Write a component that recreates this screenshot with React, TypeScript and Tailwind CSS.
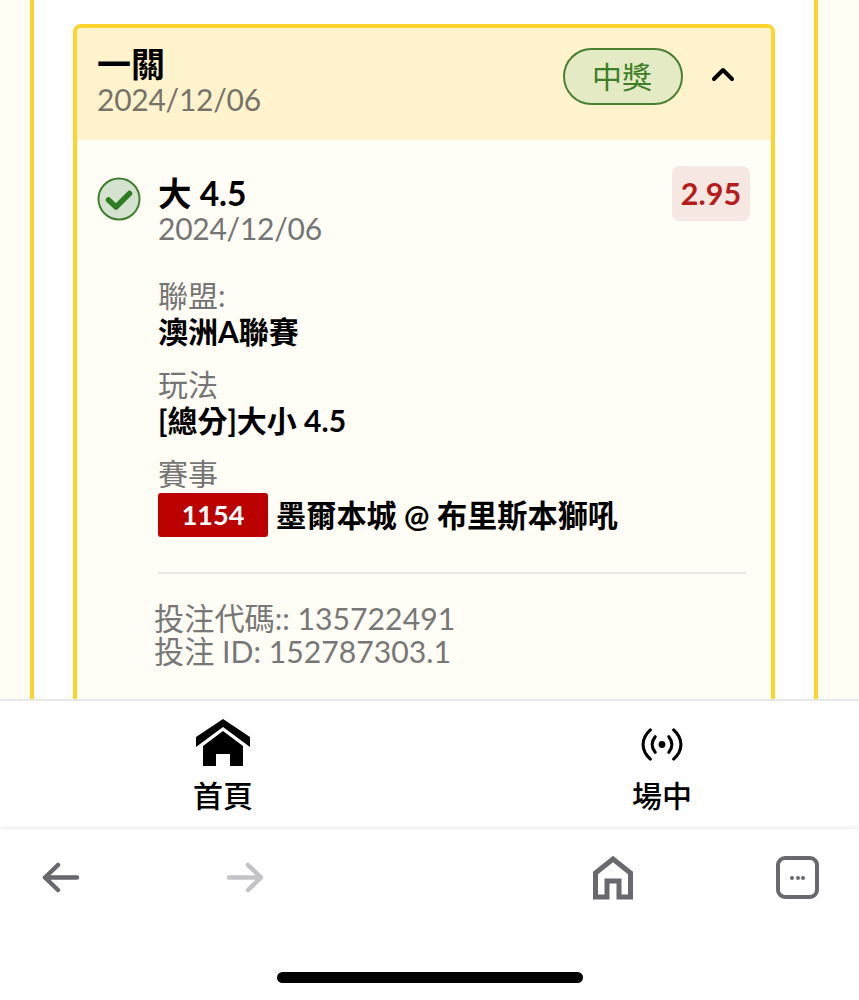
export default function App() {
  const font = { fontFamily: 'Lato, "Noto Sans CJK TC", sans-serif' };
  return (
    <div style={font} className="w-[859px] h-[1000px] overflow-hidden flex flex-col bg-white">
      <main className="h-[699px] shrink-0 overflow-hidden bg-[#fffdf4] pl-[30px] pr-[41px]">
        <div className="h-[760px] border-x-4 border-[#fdd32e] bg-white px-[39px] pt-[24px]">
          <div className="h-[740px] rounded-[8px] border-4 border-[#fdd32e] bg-[#fffdf5] overflow-hidden">
            <header className="h-[112px] bg-[#fff3cd] pl-[20px] pr-[36px] pt-[18px] flex items-start justify-between">
              <div>
                <div className="text-[34px] leading-[36px] font-bold text-black">一關</div>
                <div className="text-[30px] tracking-[-0.25px] leading-[35px] text-[#77736a]">2024/12/06</div>
              </div>
              <div className="flex items-center gap-[28px] mt-[2px]">
                <span className="w-[120px] h-[57px] rounded-full border-2 border-[#4a7f32] bg-[#e4ebc4] text-[#3f7f2a] text-[30px] pr-[2px] flex items-center justify-center">中獎</span>
                <svg width="24" height="16" viewBox="0 0 24 16" fill="none" stroke="black" strokeWidth="4" strokeLinecap="round" strokeLinejoin="round" className="mb-[5px]"><path d="M3 13 L12 4 L21 13" /></svg>
              </div>
            </header>
            <section className="pl-[20px] pr-[21px] pt-[26px]">
              <div className="flex items-start">
                <svg width="44" height="44" viewBox="0 0 44 44" className="mt-[11px] -ml-[0.5px] shrink-0">
                  <circle cx="22" cy="22" r="20.5" fill="#d5e2cf" stroke="#3f7f2f" strokeWidth="2" />
                  <path d="M11.5 23 L19 30 L32.5 16.5" fill="none" stroke="#2e7d22" strokeWidth="5.5" strokeLinecap="round" strokeLinejoin="round" />
                </svg>
                <div className="ml-[17.5px] flex-1">
                  <div className="flex justify-between items-start">
                    <div>
                      <div className="text-[33.5px] leading-[36px] mt-[9px] font-bold text-black">大 4.5</div>
                      <div className="text-[30px] tracking-[-0.25px] leading-[35px] text-[#757575]">2024/12/06</div>
                    </div>
                    <span className="w-[78px] h-[55px] rounded-[8px] bg-[#f7e7e2] text-[#b71c1c] text-[30.5px] font-bold flex items-center justify-center">2.95</span>
                  </div>
                  <div className="mt-[31px] text-[30px] leading-[36px] text-[#757575]">聯盟:</div>
                  <div className="text-[30px] leading-[36px] font-bold text-black">澳洲A聯賽</div>
                  <div className="mt-[17px] text-[30px] leading-[36px] text-[#757575]">玩法</div>
                  <div className="text-[30px] leading-[36px] font-bold text-black">[總分]大小 4.5</div>
                  <div className="mt-[17px] text-[30px] leading-[36px] text-[#757575]">賽事</div>
                  <div className="flex items-center mt-[2px]">
                    <span className="w-[110px] h-[44px] rounded-[3px] bg-[#bb0000] text-white text-[27px] font-bold flex items-center justify-center">1154</span>
                    <span className="ml-[8px] text-[30.2px] leading-[44px] font-bold text-black">墨爾本城 @ 布里斯本獅吼</span>
                  </div>
                  <div className="mt-[35px] h-[2px] w-[588px] bg-[#e8e6e0]" />
                  <div className="mt-[28px] -ml-[4px] text-[30.2px] leading-[33px] text-[#777777]">
                    <div>投注代碼:: 135722491</div>
                    <div>投注 ID: 152787303.1</div>
                  </div>
                </div>
              </div>
            </section>
          </div>
        </div>
      </main>
      <nav className="h-[130px] shrink-0 bg-white border-t-2 border-[#e8e8e8] flex">
        <div className="w-[446px] flex flex-col items-center pt-[18px]">
          <svg width="54" height="47" viewBox="0 0 54 47" fill="black">
            <path d="M27 0 L54 18 V28 L27 8 L0 28 V18 Z" />
            <path d="M27 12 L47 27 V47 H34 V35 H20 V47 H7 V27 Z" />
          </svg>
          <span className="mt-[9px] text-[30px] leading-[40px] font-medium text-black">首頁</span>
        </div>
        <div className="flex-1 pl-[19px] flex flex-col items-center pt-[27px]">
          <svg width="42" height="33" viewBox="0 0 42 34" fill="none" stroke="black" strokeWidth="3.2" strokeLinecap="round">
            <path d="M9 2 C-1 11 -1 23 9 32" />
            <path d="M33 2 C43 11 43 23 33 32" />
            <path d="M14 9 C10 14 10 20 14 25" />
            <path d="M28 9 C32 14 32 20 28 25" />
            <circle cx="21" cy="17" r="3.5" fill="black" stroke="none" />
          </svg>
          <span className="mt-[14px] text-[30px] leading-[40px] font-medium text-black">場中</span>
        </div>
      </nav>
      <footer className="relative flex-1 bg-white shadow-[0_-1px_4px_rgba(0,0,0,0.1)]">
        <div className="flex items-start pl-[42px] pr-[39px] pt-[27px]">
          <svg width="38" height="32" viewBox="0 0 38 32" fill="none" stroke="#68686e" strokeWidth="4.5" strokeLinecap="round" strokeLinejoin="round" className="mt-[6px]">
            <path d="M35 15.5 H3 M16 3 L3 15.5 L16 28" />
          </svg>
          <svg width="38" height="32" viewBox="0 0 38 32" fill="none" stroke="#c3c3c7" strokeWidth="4.5" strokeLinecap="round" strokeLinejoin="round" className="mt-[6px] ml-[146px]">
            <path d="M3 15.5 H35 M22 3 L35 15.5 L22 28" />
          </svg>
          <svg width="40" height="44" viewBox="0 0 40 44" fill="none" stroke="#68686e" strokeWidth="5" strokeLinejoin="miter" className="ml-[329px]">
            <path d="M2.5 41 V17 L20 3 L37.5 17 V41 H26 V25 H14 V41 Z" />
          </svg>
          <div className="ml-[143px] w-[43px] h-[43px] rounded-[9px] border-[4px] border-[#68686e] flex items-center justify-center gap-[1.5px]">
            <i className="w-[4px] h-[4px] rounded-full bg-[#68686e]" />
            <i className="w-[4px] h-[4px] rounded-full bg-[#68686e]" />
            <i className="w-[4px] h-[4px] rounded-full bg-[#68686e]" />
          </div>
        </div>
        <div className="absolute bottom-[17px] left-[277px] w-[306px] h-[11px] rounded-full bg-black" />
      </footer>
    </div>
  );
}
